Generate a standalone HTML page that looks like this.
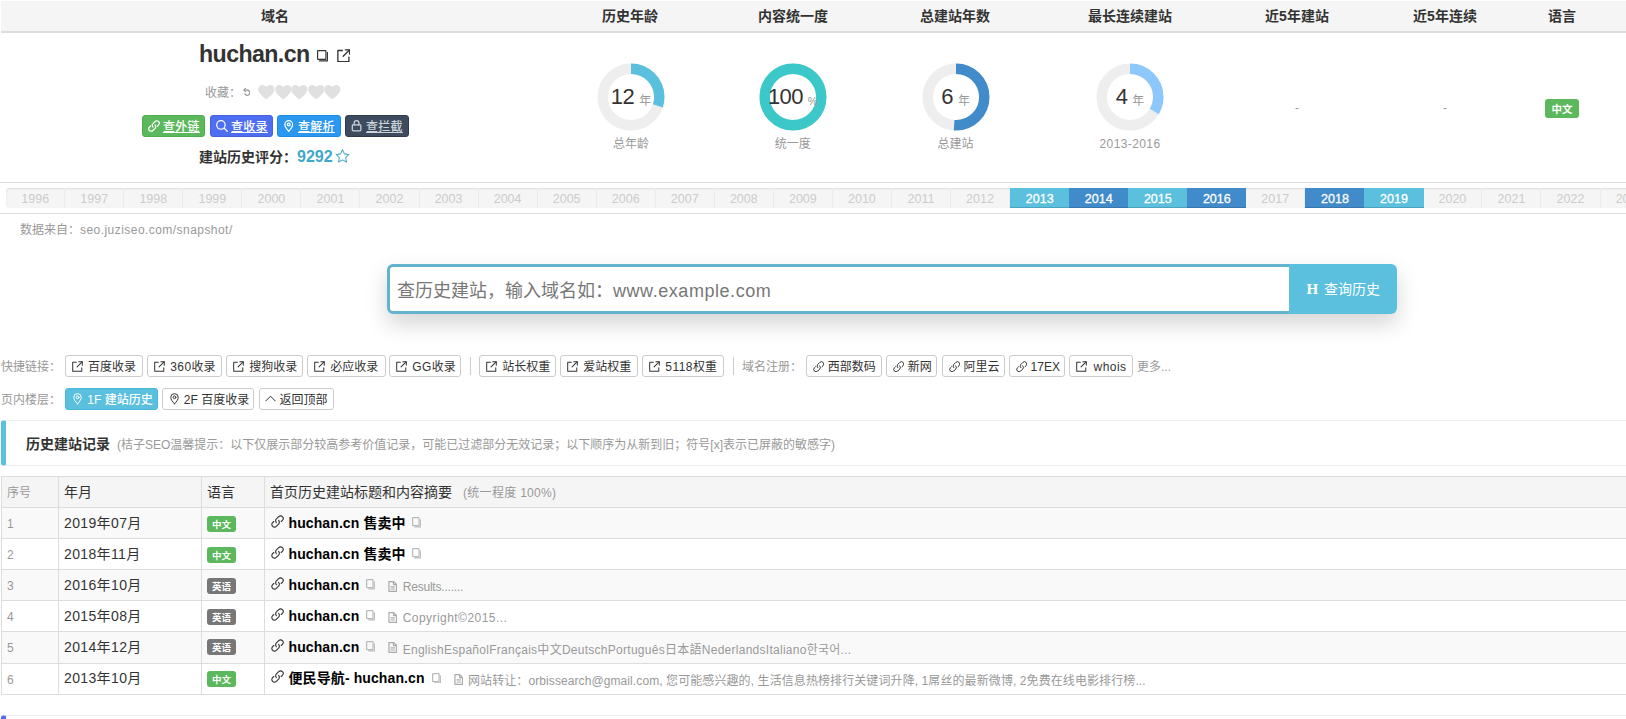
<!DOCTYPE html><html lang="zh-CN"><head><meta charset="utf-8"><title>huchan.cn 历史建站记录</title>
<style>
html,body{margin:0;padding:0;background:#fff}
body{width:1626px;height:719px;position:relative;overflow:hidden;font-family:"Liberation Sans","Noto Sans CJK SC",sans-serif;font-size:14px;color:#333}
.a{position:absolute;white-space:nowrap;line-height:1}
.c{transform:translateX(-50%)}
.b{font-weight:bold}
.g{color:#999}
.s12{font-size:12px}
.btn{position:absolute;box-sizing:border-box;height:22px;border:1px solid #ccc;border-radius:3px;background:#fff;color:#333;font-size:12px}
.btn span{position:absolute;top:4.5px;line-height:12px;white-space:nowrap}
.btn i{font-style:normal;letter-spacing:.45px}
.lbl{position:absolute;box-sizing:border-box;border-radius:3px;color:#fff;font-weight:bold;text-align:center;white-space:nowrap}
</style></head><body>
<div class="a" style="left:1px;top:1px;width:1626px;height:30px;background:#f5f5f5;border-bottom:2px solid #ddd"></div>
<div class="a c b" style="left:275px;top:9px;font-size:14px">域名</div>
<div class="a c b" style="left:630px;top:9px;font-size:14px">历史年龄</div>
<div class="a c b" style="left:793px;top:9px;font-size:14px">内容统一度</div>
<div class="a c b" style="left:955px;top:9px;font-size:14px">总建站年数</div>
<div class="a c b" style="left:1130px;top:9px;font-size:14px">最长连续建站</div>
<div class="a c b" style="left:1297px;top:9px;font-size:14px">近5年建站</div>
<div class="a c b" style="left:1445px;top:9px;font-size:14px">近5年连续</div>
<div class="a c b" style="left:1562px;top:9px;font-size:14px">语言</div>
<div class="a b" style="left:199px;top:42.5px;font-size:23.2px;letter-spacing:-0.6px;color:#333">huchan.cn</div>
<svg width="11.0" height="11.5" viewBox="0 0 11 11.5" style="position:absolute;left:317px;top:50.2px;color:#333" fill="none" stroke="currentColor" stroke-width="1.15" stroke-linecap="round" stroke-linejoin="round"><rect x="0.6" y="0.6" width="8.3" height="8.8" rx="0.4"/><path d="M10.4 2.4V10.9H2.4"/></svg>
<svg width="13.4" height="13.4" viewBox="1.8 1.6 12.6 12.6" style="position:absolute;left:336.5px;top:49px;color:#333" fill="none" stroke="currentColor" stroke-width="1.22" stroke-linecap="round" stroke-linejoin="round"><path d="M13 9.2V13.4H2.6V3H6.8"/><path d="M9.6 2.4H13.6V6.4"/><path d="M13.4 2.6L7.6 8.4"/></svg>
<div class="a g s12" style="left:205px;top:87px">收藏：</div>
<svg width="7.52" height="8.5" viewBox="2.5 2 11.5 13" style="position:absolute;left:242.5px;top:88px;color:#999" fill="none" stroke="currentColor" stroke-width="1.84" stroke-linecap="round" stroke-linejoin="round"><path d="M4.2 5.2H9a4 4 0 1 1-3.6 5.8"/><path d="M6.4 2.8L4 5.2l2.4 2.4"/></svg>
<svg width="16.6" height="14.4" viewBox="1 1.8 14 12.4" style="position:absolute;left:258.0px;top:84.7px" fill="#e0e0e0" stroke="none" stroke-width="0" stroke-linecap="round" stroke-linejoin="round"><path d="M8 14.2C3.2 10.4 1 8 1 5.4 1 3.2 2.7 1.8 4.6 1.8c1.4 0 2.6.8 3.4 2 .8-1.2 2-2 3.4-2C13.3 1.8 15 3.2 15 5.4c0 2.6-2.2 5-7 8.8z"/></svg>
<svg width="16.6" height="14.4" viewBox="1 1.8 14 12.4" style="position:absolute;left:274.6px;top:84.7px" fill="#e0e0e0" stroke="none" stroke-width="0" stroke-linecap="round" stroke-linejoin="round"><path d="M8 14.2C3.2 10.4 1 8 1 5.4 1 3.2 2.7 1.8 4.6 1.8c1.4 0 2.6.8 3.4 2 .8-1.2 2-2 3.4-2C13.3 1.8 15 3.2 15 5.4c0 2.6-2.2 5-7 8.8z"/></svg>
<svg width="16.6" height="14.4" viewBox="1 1.8 14 12.4" style="position:absolute;left:291.1px;top:84.7px" fill="#e0e0e0" stroke="none" stroke-width="0" stroke-linecap="round" stroke-linejoin="round"><path d="M8 14.2C3.2 10.4 1 8 1 5.4 1 3.2 2.7 1.8 4.6 1.8c1.4 0 2.6.8 3.4 2 .8-1.2 2-2 3.4-2C13.3 1.8 15 3.2 15 5.4c0 2.6-2.2 5-7 8.8z"/></svg>
<svg width="16.6" height="14.4" viewBox="1 1.8 14 12.4" style="position:absolute;left:307.6px;top:84.7px" fill="#e0e0e0" stroke="none" stroke-width="0" stroke-linecap="round" stroke-linejoin="round"><path d="M8 14.2C3.2 10.4 1 8 1 5.4 1 3.2 2.7 1.8 4.6 1.8c1.4 0 2.6.8 3.4 2 .8-1.2 2-2 3.4-2C13.3 1.8 15 3.2 15 5.4c0 2.6-2.2 5-7 8.8z"/></svg>
<svg width="16.6" height="14.4" viewBox="1 1.8 14 12.4" style="position:absolute;left:324.2px;top:84.7px" fill="#e0e0e0" stroke="none" stroke-width="0" stroke-linecap="round" stroke-linejoin="round"><path d="M8 14.2C3.2 10.4 1 8 1 5.4 1 3.2 2.7 1.8 4.6 1.8c1.4 0 2.6.8 3.4 2 .8-1.2 2-2 3.4-2C13.3 1.8 15 3.2 15 5.4c0 2.6-2.2 5-7 8.8z"/></svg>
<div class="btn" style="left:142px;top:115px;width:63px;height:22px;background:#5cb85c;border-color:#4cae4c;color:#fff">
<svg width="12.0" height="12.0" viewBox="1.5 1.5 13 13" style="position:absolute;left:5px;top:4px;color:#fff" fill="none" stroke="currentColor" stroke-width="1.35" stroke-linecap="round" stroke-linejoin="round"><path d="M6.9 9.1a2.6 2.6 0 0 1 0-3.7l2.3-2.3a2.6 2.6 0 0 1 3.7 3.7l-1.2 1.2"/><path d="M9.1 6.9a2.6 2.6 0 0 1 0 3.7l-2.3 2.3a2.6 2.6 0 0 1-3.7-3.7l1.2-1.2"/></svg>
<span style="left:20px;letter-spacing:.3px;font-weight:500;text-decoration:underline">查外链</span></div>
<div class="btn" style="left:210px;top:115px;width:63px;height:22px;background:#4e6ef2;border-color:#4662d9;color:#fff">
<svg width="12.0" height="12.0" viewBox="1.4 1.4 13.6 13.6" style="position:absolute;left:5px;top:4px;color:#fff" fill="none" stroke="currentColor" stroke-width="1.42" stroke-linecap="round" stroke-linejoin="round"><circle cx="7" cy="7" r="4.8"/><path d="M10.6 10.6L14.2 14.2"/></svg>
<span style="left:20px;letter-spacing:.3px;font-weight:500;text-decoration:underline">查收录</span></div>
<div class="btn" style="left:277px;top:115px;width:64px;height:22px;background:#2b98f0;border-color:#1e88e5;color:#fff">
<svg width="11.49" height="12.0" viewBox="1.2 1.2 13.6 14.2" style="position:absolute;left:5px;top:4px;color:#fff" fill="none" stroke="currentColor" stroke-width="1.48" stroke-linecap="round" stroke-linejoin="round"><path d="M8 14.6C5 11.4 3.4 9 3.4 6.6a4.6 4.6 0 0 1 9.2 0C12.6 9 11 11.4 8 14.6z"/><circle cx="8" cy="6.5" r="1.7"/></svg>
<span style="left:20px;letter-spacing:.3px;font-weight:500;text-decoration:underline">查解析</span></div>
<div class="btn" style="left:345px;top:115px;width:64px;height:22px;background:#3e4b5e;border-color:#2f3a4a;color:#ccd3dc">
<svg width="11.14" height="12.0" viewBox="1.5 1.4 13 14" style="position:absolute;left:5px;top:4px;color:#ccd3dc" fill="none" stroke="currentColor" stroke-width="1.46" stroke-linecap="round" stroke-linejoin="round"><rect x="3" y="7.2" width="10" height="7" rx="1"/><path d="M5.2 7.2V5a2.8 2.8 0 0 1 5.6 0v2.2"/></svg>
<span style="left:20px;letter-spacing:.3px;font-weight:500;text-decoration:underline">查拦截</span></div>
<div class="a b" style="left:199px;top:150px;font-size:14px">建站历史评分：</div>
<div class="a b" style="left:297px;top:148.5px;font-size:16px;color:#3fa9c9">9292</div>
<svg width="15.0" height="14.19" viewBox="0.6 1 14.8 14" style="position:absolute;left:335px;top:148.5px;color:#4aa8c6" fill="none" stroke="currentColor" stroke-width="1.04" stroke-linecap="round" stroke-linejoin="round"><path d="M8 1.8l1.9 4 4.4.6-3.2 3 .8 4.4L8 11.7l-3.9 2.1.8-4.4-3.2-3 4.4-.6z"/></svg>
<svg width="70" height="70" viewBox="-35 -35 70 70" style="position:absolute;left:596.0px;top:61.8px"><circle r="28.3" fill="none" stroke="#eee" stroke-width="10.4"/><circle r="28.3" fill="none" stroke="#5bc0de" stroke-width="10.4" stroke-dasharray="53.34 177.81" transform="rotate(-90)"/></svg>
<div class="a c" style="left:631.0px;top:85.8px"><span style="font-size:22px;letter-spacing:-0.6px;color:#333">12</span><span style="font-size:12px;color:#999;margin-left:5px;position:relative;top:1.5px">年</span></div>
<div class="a c g s12" style="left:631.0px;top:138px">总年龄</div>
<svg width="70" height="70" viewBox="-35 -35 70 70" style="position:absolute;left:757.8px;top:61.8px"><circle r="28.3" fill="none" stroke="#eee" stroke-width="10.4"/><circle r="28.3" fill="none" stroke="#3cc8c8" stroke-width="10.4"/></svg>
<div class="a c" style="left:792.8px;top:85.8px"><span style="font-size:22px;letter-spacing:-0.6px;color:#333">100</span><span style="font-size:11px;color:#999;margin-left:5px;position:relative;top:1.5px">%</span></div>
<div class="a c g s12" style="left:792.8px;top:138px">统一度</div>
<svg width="70" height="70" viewBox="-35 -35 70 70" style="position:absolute;left:920.6px;top:61.8px"><circle r="28.3" fill="none" stroke="#eee" stroke-width="10.4"/><circle r="28.3" fill="none" stroke="#428bca" stroke-width="10.4" stroke-dasharray="90.69 177.81" transform="rotate(-90)"/></svg>
<div class="a c" style="left:955.6px;top:85.8px"><span style="font-size:22px;letter-spacing:-0.6px;color:#333">6</span><span style="font-size:12px;color:#999;margin-left:5px;position:relative;top:1.5px">年</span></div>
<div class="a c g s12" style="left:955.6px;top:138px">总建站</div>
<svg width="70" height="70" viewBox="-35 -35 70 70" style="position:absolute;left:1095.0px;top:61.8px"><circle r="28.3" fill="none" stroke="#eee" stroke-width="10.4"/><circle r="28.3" fill="none" stroke="#8cc8fb" stroke-width="10.4" stroke-dasharray="59.57 177.81" transform="rotate(-90)"/></svg>
<div class="a c" style="left:1130.0px;top:85.8px"><span style="font-size:22px;letter-spacing:-0.6px;color:#333">4</span><span style="font-size:12px;color:#999;margin-left:5px;position:relative;top:1.5px">年</span></div>
<div class="a c g s12" style="left:1130.0px;top:138px;letter-spacing:.4px">2013-2016</div>
<div class="a c g s12" style="left:1297px;top:102px">-</div>
<div class="a c g s12" style="left:1445px;top:102px">-</div>
<div class="lbl" style="left:1545px;top:99px;width:34px;height:19px;background:#5cb85c;font-size:10.5px;line-height:20px;overflow:hidden">中文</div>
<div class="a" style="left:0;top:182px;width:1626px;height:32px;box-sizing:border-box;border-top:1px solid #ddd;border-bottom:1px solid #ddd"></div>
<div class="a" style="left:6px;top:188px;width:1640px;height:20px;background:#f5f5f5;border-radius:4px 0 0 4px;box-shadow:inset 0 1px 2px rgba(0,0,0,.1)"></div>
<div class="a" style="left:6.20px;top:188px;width:59.05px;height:20px;box-sizing:border-box;border-right:1px solid #ebebeb;color:#ccc;font-size:12.5px;line-height:22.5px;text-align:center">1996</div>
<div class="a" style="left:65.25px;top:188px;width:59.05px;height:20px;box-sizing:border-box;border-right:1px solid #ebebeb;color:#ccc;font-size:12.5px;line-height:22.5px;text-align:center">1997</div>
<div class="a" style="left:124.30px;top:188px;width:59.05px;height:20px;box-sizing:border-box;border-right:1px solid #ebebeb;color:#ccc;font-size:12.5px;line-height:22.5px;text-align:center">1998</div>
<div class="a" style="left:183.35px;top:188px;width:59.05px;height:20px;box-sizing:border-box;border-right:1px solid #ebebeb;color:#ccc;font-size:12.5px;line-height:22.5px;text-align:center">1999</div>
<div class="a" style="left:242.40px;top:188px;width:59.05px;height:20px;box-sizing:border-box;border-right:1px solid #ebebeb;color:#ccc;font-size:12.5px;line-height:22.5px;text-align:center">2000</div>
<div class="a" style="left:301.45px;top:188px;width:59.05px;height:20px;box-sizing:border-box;border-right:1px solid #ebebeb;color:#ccc;font-size:12.5px;line-height:22.5px;text-align:center">2001</div>
<div class="a" style="left:360.50px;top:188px;width:59.05px;height:20px;box-sizing:border-box;border-right:1px solid #ebebeb;color:#ccc;font-size:12.5px;line-height:22.5px;text-align:center">2002</div>
<div class="a" style="left:419.55px;top:188px;width:59.05px;height:20px;box-sizing:border-box;border-right:1px solid #ebebeb;color:#ccc;font-size:12.5px;line-height:22.5px;text-align:center">2003</div>
<div class="a" style="left:478.60px;top:188px;width:59.05px;height:20px;box-sizing:border-box;border-right:1px solid #ebebeb;color:#ccc;font-size:12.5px;line-height:22.5px;text-align:center">2004</div>
<div class="a" style="left:537.65px;top:188px;width:59.05px;height:20px;box-sizing:border-box;border-right:1px solid #ebebeb;color:#ccc;font-size:12.5px;line-height:22.5px;text-align:center">2005</div>
<div class="a" style="left:596.70px;top:188px;width:59.05px;height:20px;box-sizing:border-box;border-right:1px solid #ebebeb;color:#ccc;font-size:12.5px;line-height:22.5px;text-align:center">2006</div>
<div class="a" style="left:655.75px;top:188px;width:59.05px;height:20px;box-sizing:border-box;border-right:1px solid #ebebeb;color:#ccc;font-size:12.5px;line-height:22.5px;text-align:center">2007</div>
<div class="a" style="left:714.80px;top:188px;width:59.05px;height:20px;box-sizing:border-box;border-right:1px solid #ebebeb;color:#ccc;font-size:12.5px;line-height:22.5px;text-align:center">2008</div>
<div class="a" style="left:773.85px;top:188px;width:59.05px;height:20px;box-sizing:border-box;border-right:1px solid #ebebeb;color:#ccc;font-size:12.5px;line-height:22.5px;text-align:center">2009</div>
<div class="a" style="left:832.90px;top:188px;width:59.05px;height:20px;box-sizing:border-box;border-right:1px solid #ebebeb;color:#ccc;font-size:12.5px;line-height:22.5px;text-align:center">2010</div>
<div class="a" style="left:891.95px;top:188px;width:59.05px;height:20px;box-sizing:border-box;border-right:1px solid #ebebeb;color:#ccc;font-size:12.5px;line-height:22.5px;text-align:center">2011</div>
<div class="a" style="left:951.00px;top:188px;width:59.05px;height:20px;box-sizing:border-box;border-right:1px solid #ebebeb;color:#ccc;font-size:12.5px;line-height:22.5px;text-align:center">2012</div>
<div class="a" style="left:1010.05px;top:188px;width:59.3px;height:20px;background:#5bc0de;color:#fff;font-size:12.5px;line-height:22.5px;text-align:center;-webkit-text-stroke:.3px #fff;box-shadow:inset 0 -1px 0 rgba(0,0,0,.15)">2013</div>
<div class="a" style="left:1069.10px;top:188px;width:59.3px;height:20px;background:#428bca;color:#fff;font-size:12.5px;line-height:22.5px;text-align:center;-webkit-text-stroke:.3px #fff;box-shadow:inset 0 -1px 0 rgba(0,0,0,.15)">2014</div>
<div class="a" style="left:1128.15px;top:188px;width:59.3px;height:20px;background:#5bc0de;color:#fff;font-size:12.5px;line-height:22.5px;text-align:center;-webkit-text-stroke:.3px #fff;box-shadow:inset 0 -1px 0 rgba(0,0,0,.15)">2015</div>
<div class="a" style="left:1187.20px;top:188px;width:59.3px;height:20px;background:#428bca;color:#fff;font-size:12.5px;line-height:22.5px;text-align:center;-webkit-text-stroke:.3px #fff;box-shadow:inset 0 -1px 0 rgba(0,0,0,.15)">2016</div>
<div class="a" style="left:1246.25px;top:188px;width:59.05px;height:20px;box-sizing:border-box;border-right:1px solid #ebebeb;color:#ccc;font-size:12.5px;line-height:22.5px;text-align:center">2017</div>
<div class="a" style="left:1305.30px;top:188px;width:59.3px;height:20px;background:#428bca;color:#fff;font-size:12.5px;line-height:22.5px;text-align:center;-webkit-text-stroke:.3px #fff;box-shadow:inset 0 -1px 0 rgba(0,0,0,.15)">2018</div>
<div class="a" style="left:1364.35px;top:188px;width:59.3px;height:20px;background:#5bc0de;color:#fff;font-size:12.5px;line-height:22.5px;text-align:center;-webkit-text-stroke:.3px #fff;box-shadow:inset 0 -1px 0 rgba(0,0,0,.15)">2019</div>
<div class="a" style="left:1423.40px;top:188px;width:59.05px;height:20px;box-sizing:border-box;border-right:1px solid #ebebeb;color:#ccc;font-size:12.5px;line-height:22.5px;text-align:center">2020</div>
<div class="a" style="left:1482.45px;top:188px;width:59.05px;height:20px;box-sizing:border-box;border-right:1px solid #ebebeb;color:#ccc;font-size:12.5px;line-height:22.5px;text-align:center">2021</div>
<div class="a" style="left:1541.50px;top:188px;width:59.05px;height:20px;box-sizing:border-box;border-right:1px solid #ebebeb;color:#ccc;font-size:12.5px;line-height:22.5px;text-align:center">2022</div>
<div class="a" style="left:1600.55px;top:188px;width:59.05px;height:20px;box-sizing:border-box;border-right:1px solid #ebebeb;color:#ccc;font-size:12.5px;line-height:22.5px;text-align:center">2023</div>
<div class="a g s12" style="left:20px;top:224px">数据来自：<span style="letter-spacing:0.45px">seo.juziseo.com/snapshot/</span></div>
<div class="a" style="left:387px;top:264px;width:1010px;height:50px;border-radius:6px;box-shadow:0 10px 22px rgba(0,0,0,.17)"></div>
<div class="a" style="left:387px;top:264px;width:905px;height:50px;box-sizing:border-box;border:3px solid #62b3ce;border-radius:6px 0 0 6px;background:#fff"></div>
<div class="a" style="left:397px;top:281.5px;font-size:18px;color:#777">查历史建站，输入域名如：<span style="letter-spacing:.55px">www.example.com</span></div>
<div class="a" style="left:1289px;top:264px;width:108px;height:50px;background:#5bc0de;border-radius:0 6px 6px 0"></div>
<div class="a b" style="left:1306.5px;top:281.5px;font-size:15px;color:#fff;font-family:'Liberation Serif',serif">H</div>
<div class="a" style="left:1324px;top:282px;font-size:14px;color:#fff">查询历史</div>
<div class="a g s12" style="left:1px;top:361px">快捷链接：</div>
<div class="btn" style="left:65.1px;top:355.0px;width:78.1px;">
<svg width="11.0" height="11.0" viewBox="1.8 1.6 12.6 12.6" style="position:absolute;left:6px;top:4.5px;color:#333" fill="none" stroke="currentColor" stroke-width="1.15" stroke-linecap="round" stroke-linejoin="round"><path d="M13 9.2V13.4H2.6V3H6.8"/><path d="M9.6 2.4H13.6V6.4"/><path d="M13.4 2.6L7.6 8.4"/></svg>
<span style="left:22px">百度收录</span></div>
<div class="btn" style="left:147.2px;top:355.0px;width:75.0px;">
<svg width="11.0" height="11.0" viewBox="1.8 1.6 12.6 12.6" style="position:absolute;left:6px;top:4.5px;color:#333" fill="none" stroke="currentColor" stroke-width="1.15" stroke-linecap="round" stroke-linejoin="round"><path d="M13 9.2V13.4H2.6V3H6.8"/><path d="M9.6 2.4H13.6V6.4"/><path d="M13.4 2.6L7.6 8.4"/></svg>
<span style="left:22px"><i>360</i>收录</span></div>
<div class="btn" style="left:226.3px;top:355.0px;width:76.9px;">
<svg width="11.0" height="11.0" viewBox="1.8 1.6 12.6 12.6" style="position:absolute;left:6px;top:4.5px;color:#333" fill="none" stroke="currentColor" stroke-width="1.15" stroke-linecap="round" stroke-linejoin="round"><path d="M13 9.2V13.4H2.6V3H6.8"/><path d="M9.6 2.4H13.6V6.4"/><path d="M13.4 2.6L7.6 8.4"/></svg>
<span style="left:22px">搜狗收录</span></div>
<div class="btn" style="left:307.3px;top:355.0px;width:78.4px;">
<svg width="11.0" height="11.0" viewBox="1.8 1.6 12.6 12.6" style="position:absolute;left:6px;top:4.5px;color:#333" fill="none" stroke="currentColor" stroke-width="1.15" stroke-linecap="round" stroke-linejoin="round"><path d="M13 9.2V13.4H2.6V3H6.8"/><path d="M9.6 2.4H13.6V6.4"/><path d="M13.4 2.6L7.6 8.4"/></svg>
<span style="left:22px">必应收录</span></div>
<div class="btn" style="left:389.2px;top:355.0px;width:72.3px;">
<svg width="11.0" height="11.0" viewBox="1.8 1.6 12.6 12.6" style="position:absolute;left:6px;top:4.5px;color:#333" fill="none" stroke="currentColor" stroke-width="1.15" stroke-linecap="round" stroke-linejoin="round"><path d="M13 9.2V13.4H2.6V3H6.8"/><path d="M9.6 2.4H13.6V6.4"/><path d="M13.4 2.6L7.6 8.4"/></svg>
<span style="left:22px"><i>GG</i>收录</span></div>
<div class="btn" style="left:479.3px;top:355.0px;width:76.9px;">
<svg width="11.0" height="11.0" viewBox="1.8 1.6 12.6 12.6" style="position:absolute;left:6px;top:4.5px;color:#333" fill="none" stroke="currentColor" stroke-width="1.15" stroke-linecap="round" stroke-linejoin="round"><path d="M13 9.2V13.4H2.6V3H6.8"/><path d="M9.6 2.4H13.6V6.4"/><path d="M13.4 2.6L7.6 8.4"/></svg>
<span style="left:22px">站长权重</span></div>
<div class="btn" style="left:560.3px;top:355.0px;width:77.9px;">
<svg width="11.0" height="11.0" viewBox="1.8 1.6 12.6 12.6" style="position:absolute;left:6px;top:4.5px;color:#333" fill="none" stroke="currentColor" stroke-width="1.15" stroke-linecap="round" stroke-linejoin="round"><path d="M13 9.2V13.4H2.6V3H6.8"/><path d="M9.6 2.4H13.6V6.4"/><path d="M13.4 2.6L7.6 8.4"/></svg>
<span style="left:22px">爱站权重</span></div>
<div class="btn" style="left:642.3px;top:355.0px;width:82.0px;">
<svg width="11.0" height="11.0" viewBox="1.8 1.6 12.6 12.6" style="position:absolute;left:6px;top:4.5px;color:#333" fill="none" stroke="currentColor" stroke-width="1.15" stroke-linecap="round" stroke-linejoin="round"><path d="M13 9.2V13.4H2.6V3H6.8"/><path d="M9.6 2.4H13.6V6.4"/><path d="M13.4 2.6L7.6 8.4"/></svg>
<span style="left:22px"><i>5118</i>权重</span></div>
<div class="btn" style="left:806.3px;top:355.0px;width:76.0px;">
<svg width="11.5" height="11.5" viewBox="1.5 1.5 13 13" style="position:absolute;left:5.5px;top:4.5px;color:#333" fill="none" stroke="currentColor" stroke-width="1.13" stroke-linecap="round" stroke-linejoin="round"><path d="M6.9 9.1a2.6 2.6 0 0 1 0-3.7l2.3-2.3a2.6 2.6 0 0 1 3.7 3.7l-1.2 1.2"/><path d="M9.1 6.9a2.6 2.6 0 0 1 0 3.7l-2.3 2.3a2.6 2.6 0 0 1-3.7-3.7l1.2-1.2"/></svg>
<span style="left:20.4px">西部数码</span></div>
<div class="btn" style="left:886.4px;top:355.0px;width:51.1px;">
<svg width="11.5" height="11.5" viewBox="1.5 1.5 13 13" style="position:absolute;left:5.5px;top:4.5px;color:#333" fill="none" stroke="currentColor" stroke-width="1.13" stroke-linecap="round" stroke-linejoin="round"><path d="M6.9 9.1a2.6 2.6 0 0 1 0-3.7l2.3-2.3a2.6 2.6 0 0 1 3.7 3.7l-1.2 1.2"/><path d="M9.1 6.9a2.6 2.6 0 0 1 0 3.7l-2.3 2.3a2.6 2.6 0 0 1-3.7-3.7l1.2-1.2"/></svg>
<span style="left:20.4px">新网</span></div>
<div class="btn" style="left:942.1px;top:355.0px;width:63.3px;">
<svg width="11.5" height="11.5" viewBox="1.5 1.5 13 13" style="position:absolute;left:5.5px;top:4.5px;color:#333" fill="none" stroke="currentColor" stroke-width="1.13" stroke-linecap="round" stroke-linejoin="round"><path d="M6.9 9.1a2.6 2.6 0 0 1 0-3.7l2.3-2.3a2.6 2.6 0 0 1 3.7 3.7l-1.2 1.2"/><path d="M9.1 6.9a2.6 2.6 0 0 1 0 3.7l-2.3 2.3a2.6 2.6 0 0 1-3.7-3.7l1.2-1.2"/></svg>
<span style="left:20.4px">阿里云</span></div>
<div class="btn" style="left:1009.2px;top:355.0px;width:56.3px;">
<svg width="11.5" height="11.5" viewBox="1.5 1.5 13 13" style="position:absolute;left:5.5px;top:4.5px;color:#333" fill="none" stroke="currentColor" stroke-width="1.13" stroke-linecap="round" stroke-linejoin="round"><path d="M6.9 9.1a2.6 2.6 0 0 1 0-3.7l2.3-2.3a2.6 2.6 0 0 1 3.7 3.7l-1.2 1.2"/><path d="M9.1 6.9a2.6 2.6 0 0 1 0 3.7l-2.3 2.3a2.6 2.6 0 0 1-3.7-3.7l1.2-1.2"/></svg>
<span style="left:20.4px">17EX</span></div>
<div class="btn" style="left:1069.3px;top:355.0px;width:63.3px;">
<svg width="11.0" height="11.0" viewBox="1.8 1.6 12.6 12.6" style="position:absolute;left:6px;top:4.5px;color:#333" fill="none" stroke="currentColor" stroke-width="1.15" stroke-linecap="round" stroke-linejoin="round"><path d="M13 9.2V13.4H2.6V3H6.8"/><path d="M9.6 2.4H13.6V6.4"/><path d="M13.4 2.6L7.6 8.4"/></svg>
<span style="left:23.3px"><i>whois</i></span></div>
<div class="a" style="left:470px;top:357px;width:1px;height:18px;background:#ccc"></div>
<div class="a" style="left:733px;top:357px;width:1px;height:18px;background:#ccc"></div>
<div class="a g s12" style="left:742px;top:361px">域名注册：</div>
<div class="a g s12" style="left:1137px;top:361px">更多...</div>
<div class="a g s12" style="left:1px;top:394px">页内楼层：</div>
<div class="btn" style="left:65.0px;top:388.0px;width:93.4px;background:#5bc0de;border-color:#46b8da;color:#fff;font-weight:500;">
<svg width="11.01" height="11.5" viewBox="1.2 1.2 13.6 14.2" style="position:absolute;left:5.5px;top:4.2px;color:#fff" fill="none" stroke="currentColor" stroke-width="1.23" stroke-linecap="round" stroke-linejoin="round"><path d="M8 14.6C5 11.4 3.4 9 3.4 6.6a4.6 4.6 0 0 1 9.2 0C12.6 9 11 11.4 8 14.6z"/><circle cx="8" cy="6.5" r="1.7"/></svg>
<span style="left:21.3px">1F 建站历史</span></div>
<div class="btn" style="left:162.3px;top:388.0px;width:92.0px;">
<svg width="11.01" height="11.5" viewBox="1.2 1.2 13.6 14.2" style="position:absolute;left:5.5px;top:4.2px;color:#333" fill="none" stroke="currentColor" stroke-width="1.23" stroke-linecap="round" stroke-linejoin="round"><path d="M8 14.6C5 11.4 3.4 9 3.4 6.6a4.6 4.6 0 0 1 9.2 0C12.6 9 11 11.4 8 14.6z"/><circle cx="8" cy="6.5" r="1.7"/></svg>
<span style="left:20.5px">2F 百度收录</span></div>
<div class="btn" style="left:259.0px;top:388.0px;width:75.4px;">
<svg width="11.0" height="9.17" viewBox="2 3 12 10" style="position:absolute;left:5px;top:4.5px;color:#333" fill="none" stroke="currentColor" stroke-width="1.09" stroke-linecap="round" stroke-linejoin="round"><path d="M2.8 10.6L8 5.4l5.2 5.2"/></svg>
<span style="left:19.5px">返回顶部</span></div>
<div class="a" style="left:1px;top:420px;width:1640px;height:46px;box-sizing:border-box;border:1px solid #eee;border-left:5px solid #5bc0de;border-radius:3px"></div>
<div class="a b" style="left:26px;top:436.5px;font-size:14px">历史建站记录</div>
<div class="a g s12" style="left:117px;top:438.5px">(桔子SEO温馨提示：以下仅展示部分较高参考价值记录，可能已过滤部分无效记录；以下顺序为从新到旧；符号[x]表示已屏蔽的敏感字)</div>
<div class="a" style="left:1px;top:476.0px;width:1640px;height:219px;box-sizing:border-box;border:1px solid #ddd;border-right:0"></div>
<div class="a" style="left:2px;top:477px;width:1640px;height:31px;box-sizing:border-box;background:#f5f5f5;border-bottom:1px solid #ddd"></div>
<div class="a" style="left:2px;top:508px;width:1640px;height:31px;box-sizing:border-box;background:#f9f9f9;border-bottom:1px solid #ddd"></div>
<div class="a" style="left:2px;top:539px;width:1640px;height:31px;box-sizing:border-box;background:#fff;border-bottom:1px solid #ddd"></div>
<div class="a" style="left:2px;top:570px;width:1640px;height:31px;box-sizing:border-box;background:#f9f9f9;border-bottom:1px solid #ddd"></div>
<div class="a" style="left:2px;top:601px;width:1640px;height:31px;box-sizing:border-box;background:#fff;border-bottom:1px solid #ddd"></div>
<div class="a" style="left:2px;top:632px;width:1640px;height:32px;box-sizing:border-box;background:#f9f9f9;border-bottom:1px solid #ddd"></div>
<div class="a" style="left:2px;top:664px;width:1640px;height:31px;box-sizing:border-box;background:#fff;border-bottom:1px solid #ddd"></div>
<div class="a" style="left:58px;top:476.5px;width:1px;height:218px;background:#ddd"></div>
<div class="a" style="left:201px;top:476.5px;width:1px;height:218px;background:#ddd"></div>
<div class="a" style="left:264px;top:476.5px;width:1px;height:218px;background:#ddd"></div>
<div class="a g s12" style="left:7px;top:487.4px">序号</div>
<div class="a" style="left:64px;top:484.5px">年月</div>
<div class="a" style="left:207px;top:484.5px">语言</div>
<div class="a" style="left:270px;top:484.5px">首页历史建站标题和内容摘要</div>
<div class="a g s12" style="left:463px;top:486.5px"><span style="letter-spacing:.3px">(统一程度 100%)</span></div>
<div class="a g s12" style="left:7px;top:518.2px">1</div>
<div class="a" style="left:64px;top:516.0px;letter-spacing:.37px">2019年07月</div>
<div class="lbl" style="left:207px;top:515.5px;width:29px;height:16px;background:#5cb85c;font-size:9.5px;line-height:17.5px;overflow:hidden">中文</div>
<svg width="13.0" height="13.0" viewBox="1.5 1.5 13 13" style="position:absolute;left:270.5px;top:515.0px;color:#333" fill="none" stroke="currentColor" stroke-width="1.1" stroke-linecap="round" stroke-linejoin="round"><path d="M6.9 9.1a2.6 2.6 0 0 1 0-3.7l2.3-2.3a2.6 2.6 0 0 1 3.7 3.7l-1.2 1.2"/><path d="M9.1 6.9a2.6 2.6 0 0 1 0 3.7l-2.3 2.3a2.6 2.6 0 0 1-3.7-3.7l1.2-1.2"/></svg>
<div class="a b" id="t0" style="left:288.5px;top:516.0px;color:#000;font-size:14px;letter-spacing:.1px">huchan.cn 售卖中</div>
<div class="a g s12" style="left:7px;top:549.2px">2</div>
<div class="a" style="left:64px;top:547.0px;letter-spacing:.37px">2018年11月</div>
<div class="lbl" style="left:207px;top:546.5px;width:29px;height:16px;background:#5cb85c;font-size:9.5px;line-height:17.5px;overflow:hidden">中文</div>
<svg width="13.0" height="13.0" viewBox="1.5 1.5 13 13" style="position:absolute;left:270.5px;top:546.0px;color:#333" fill="none" stroke="currentColor" stroke-width="1.1" stroke-linecap="round" stroke-linejoin="round"><path d="M6.9 9.1a2.6 2.6 0 0 1 0-3.7l2.3-2.3a2.6 2.6 0 0 1 3.7 3.7l-1.2 1.2"/><path d="M9.1 6.9a2.6 2.6 0 0 1 0 3.7l-2.3 2.3a2.6 2.6 0 0 1-3.7-3.7l1.2-1.2"/></svg>
<div class="a b" id="t1" style="left:288.5px;top:547.0px;color:#000;font-size:14px;letter-spacing:.1px">huchan.cn 售卖中</div>
<div class="a g s12" style="left:7px;top:580.2px">3</div>
<div class="a" style="left:64px;top:578.0px;letter-spacing:.37px">2016年10月</div>
<div class="lbl" style="left:207px;top:577.5px;width:29px;height:16px;background:#777;font-size:9.5px;line-height:17.5px;overflow:hidden">英语</div>
<svg width="13.0" height="13.0" viewBox="1.5 1.5 13 13" style="position:absolute;left:270.5px;top:577.0px;color:#333" fill="none" stroke="currentColor" stroke-width="1.1" stroke-linecap="round" stroke-linejoin="round"><path d="M6.9 9.1a2.6 2.6 0 0 1 0-3.7l2.3-2.3a2.6 2.6 0 0 1 3.7 3.7l-1.2 1.2"/><path d="M9.1 6.9a2.6 2.6 0 0 1 0 3.7l-2.3 2.3a2.6 2.6 0 0 1-3.7-3.7l1.2-1.2"/></svg>
<div class="a b" id="t2" style="left:288.5px;top:578.0px;color:#000;font-size:14px;letter-spacing:.1px">huchan.cn</div>
<div class="a g s12" style="left:7px;top:611.2px">4</div>
<div class="a" style="left:64px;top:609.0px;letter-spacing:.37px">2015年08月</div>
<div class="lbl" style="left:207px;top:608.5px;width:29px;height:16px;background:#777;font-size:9.5px;line-height:17.5px;overflow:hidden">英语</div>
<svg width="13.0" height="13.0" viewBox="1.5 1.5 13 13" style="position:absolute;left:270.5px;top:608.0px;color:#333" fill="none" stroke="currentColor" stroke-width="1.1" stroke-linecap="round" stroke-linejoin="round"><path d="M6.9 9.1a2.6 2.6 0 0 1 0-3.7l2.3-2.3a2.6 2.6 0 0 1 3.7 3.7l-1.2 1.2"/><path d="M9.1 6.9a2.6 2.6 0 0 1 0 3.7l-2.3 2.3a2.6 2.6 0 0 1-3.7-3.7l1.2-1.2"/></svg>
<div class="a b" id="t3" style="left:288.5px;top:609.0px;color:#000;font-size:14px;letter-spacing:.1px">huchan.cn</div>
<div class="a g s12" style="left:7px;top:642.0px">5</div>
<div class="a" style="left:64px;top:639.8px;letter-spacing:.37px">2014年12月</div>
<div class="lbl" style="left:207px;top:639.3px;width:29px;height:16px;background:#777;font-size:9.5px;line-height:17.5px;overflow:hidden">英语</div>
<svg width="13.0" height="13.0" viewBox="1.5 1.5 13 13" style="position:absolute;left:270.5px;top:638.8px;color:#333" fill="none" stroke="currentColor" stroke-width="1.1" stroke-linecap="round" stroke-linejoin="round"><path d="M6.9 9.1a2.6 2.6 0 0 1 0-3.7l2.3-2.3a2.6 2.6 0 0 1 3.7 3.7l-1.2 1.2"/><path d="M9.1 6.9a2.6 2.6 0 0 1 0 3.7l-2.3 2.3a2.6 2.6 0 0 1-3.7-3.7l1.2-1.2"/></svg>
<div class="a b" id="t4" style="left:288.5px;top:639.8px;color:#000;font-size:14px;letter-spacing:.1px">huchan.cn</div>
<div class="a g s12" style="left:7px;top:673.5px">6</div>
<div class="a" style="left:64px;top:671.3px;letter-spacing:.37px">2013年10月</div>
<div class="lbl" style="left:207px;top:670.8px;width:29px;height:16px;background:#5cb85c;font-size:9.5px;line-height:17.5px;overflow:hidden">中文</div>
<svg width="13.0" height="13.0" viewBox="1.5 1.5 13 13" style="position:absolute;left:270.5px;top:670.3px;color:#333" fill="none" stroke="currentColor" stroke-width="1.1" stroke-linecap="round" stroke-linejoin="round"><path d="M6.9 9.1a2.6 2.6 0 0 1 0-3.7l2.3-2.3a2.6 2.6 0 0 1 3.7 3.7l-1.2 1.2"/><path d="M9.1 6.9a2.6 2.6 0 0 1 0 3.7l-2.3 2.3a2.6 2.6 0 0 1-3.7-3.7l1.2-1.2"/></svg>
<div class="a b" id="t5" style="left:288.5px;top:671.3px;color:#000;font-size:14px;letter-spacing:.1px">便民导航- huchan.cn</div>
<svg width="9.43" height="10.5" viewBox="1.7 1.2 12.4 13.8" style="position:absolute;left:411.8px;top:517.3px;color:#bbb" fill="none" stroke="currentColor" stroke-width="1.71" stroke-linecap="round" stroke-linejoin="round"><rect x="2.5" y="2" width="8.5" height="10.5" rx="1.2"/><path d="M13.2 5v8.2a1 1 0 0 1-1 1H5.5"/></svg>
<svg width="9.43" height="10.5" viewBox="1.7 1.2 12.4 13.8" style="position:absolute;left:411.8px;top:548.3px;color:#bbb" fill="none" stroke="currentColor" stroke-width="1.71" stroke-linecap="round" stroke-linejoin="round"><rect x="2.5" y="2" width="8.5" height="10.5" rx="1.2"/><path d="M13.2 5v8.2a1 1 0 0 1-1 1H5.5"/></svg>
<svg width="9.43" height="10.5" viewBox="1.7 1.2 12.4 13.8" style="position:absolute;left:365.5px;top:579.3px;color:#bbb" fill="none" stroke="currentColor" stroke-width="1.71" stroke-linecap="round" stroke-linejoin="round"><rect x="2.5" y="2" width="8.5" height="10.5" rx="1.2"/><path d="M13.2 5v8.2a1 1 0 0 1-1 1H5.5"/></svg>
<svg width="9.43" height="11.0" viewBox="2 1 12 14" style="position:absolute;left:387.5px;top:580.5px;color:#aaa" fill="none" stroke="currentColor" stroke-width="1.53" stroke-linecap="round" stroke-linejoin="round"><path d="M3.2 1.8h6l3.6 3.6v8.8H3.2z"/><path d="M9 2v3.6h3.6"/><path d="M5.8 8.4h4.4M5.8 11.2h4.4"/></svg>
<div class="a g s12" style="left:402.7px;top:580.5px;letter-spacing:-0.2px">Results.......</div>
<svg width="9.43" height="10.5" viewBox="1.7 1.2 12.4 13.8" style="position:absolute;left:365.5px;top:610.3px;color:#bbb" fill="none" stroke="currentColor" stroke-width="1.71" stroke-linecap="round" stroke-linejoin="round"><rect x="2.5" y="2" width="8.5" height="10.5" rx="1.2"/><path d="M13.2 5v8.2a1 1 0 0 1-1 1H5.5"/></svg>
<svg width="9.43" height="11.0" viewBox="2 1 12 14" style="position:absolute;left:387.5px;top:611.5px;color:#aaa" fill="none" stroke="currentColor" stroke-width="1.53" stroke-linecap="round" stroke-linejoin="round"><path d="M3.2 1.8h6l3.6 3.6v8.8H3.2z"/><path d="M9 2v3.6h3.6"/><path d="M5.8 8.4h4.4M5.8 11.2h4.4"/></svg>
<div class="a g s12" style="left:402.7px;top:611.5px;letter-spacing:0.45px">Copyright©2015...</div>
<svg width="9.43" height="10.5" viewBox="1.7 1.2 12.4 13.8" style="position:absolute;left:365.5px;top:641.0999999999999px;color:#bbb" fill="none" stroke="currentColor" stroke-width="1.71" stroke-linecap="round" stroke-linejoin="round"><rect x="2.5" y="2" width="8.5" height="10.5" rx="1.2"/><path d="M13.2 5v8.2a1 1 0 0 1-1 1H5.5"/></svg>
<svg width="9.43" height="11.0" viewBox="2 1 12 14" style="position:absolute;left:387.5px;top:642.3px;color:#aaa" fill="none" stroke="currentColor" stroke-width="1.53" stroke-linecap="round" stroke-linejoin="round"><path d="M3.2 1.8h6l3.6 3.6v8.8H3.2z"/><path d="M9 2v3.6h3.6"/><path d="M5.8 8.4h4.4M5.8 11.2h4.4"/></svg>
<div class="a g s12" style="left:402.7px;top:643.6px;letter-spacing:0.27px">EnglishEspañolFrançais中文DeutschPortuguês日本語NederlandsItaliano한국어...</div>
<svg width="9.43" height="10.5" viewBox="1.7 1.2 12.4 13.8" style="position:absolute;left:431.5px;top:672.5999999999999px;color:#bbb" fill="none" stroke="currentColor" stroke-width="1.71" stroke-linecap="round" stroke-linejoin="round"><rect x="2.5" y="2" width="8.5" height="10.5" rx="1.2"/><path d="M13.2 5v8.2a1 1 0 0 1-1 1H5.5"/></svg>
<svg width="9.43" height="11.0" viewBox="2 1 12 14" style="position:absolute;left:453.5px;top:673.8px;color:#aaa" fill="none" stroke="currentColor" stroke-width="1.53" stroke-linecap="round" stroke-linejoin="round"><path d="M3.2 1.8h6l3.6 3.6v8.8H3.2z"/><path d="M9 2v3.6h3.6"/><path d="M5.8 8.4h4.4M5.8 11.2h4.4"/></svg>
<div class="a g s12" style="left:468.0px;top:675.1px;letter-spacing:0.09px">网站转让：orbissearch@gmail.com, 您可能感兴趣的, 生活信息热榜排行关键词升降, 1屌丝的最新微博, 2免费在线电影排行榜...</div>
<div class="a" style="left:1px;top:715px;width:1640px;height:46px;box-sizing:border-box;border:1px solid #eee;border-left:5px solid #4e6ef2;border-radius:3px"></div>
</body></html>
